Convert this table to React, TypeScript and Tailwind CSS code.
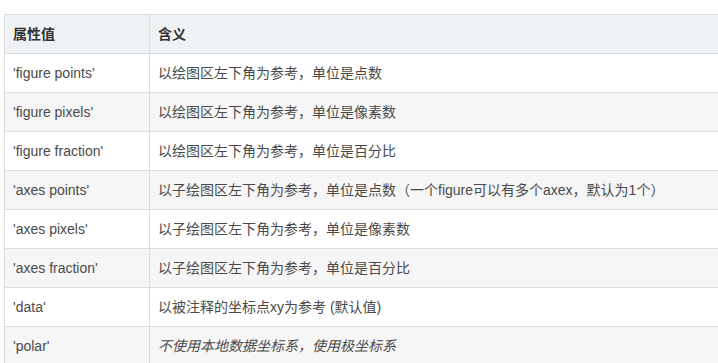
import React from 'react';

type Row = { key: string; desc: string; italic?: boolean };

const rows: Row[] = [
  { key: "'figure points'", desc: '以绘图区左下角为参考，单位是点数' },
  { key: "'figure pixels'", desc: '以绘图区左下角为参考，单位是像素数' },
  { key: "'figure fraction'", desc: '以绘图区左下角为参考，单位是百分比' },
  { key: "'axes points'", desc: '以子绘图区左下角为参考，单位是点数（一个figure可以有多个axex，默认为1个）' },
  { key: "'axes pixels'", desc: '以子绘图区左下角为参考，单位是像素数' },
  { key: "'axes fraction'", desc: '以子绘图区左下角为参考，单位是百分比' },
  { key: "'data'", desc: '以被注释的坐标点xy为参考 (默认值)' },
  { key: "'polar'", desc: '不使用本地数据坐标系，使用极坐标系', italic: true },
];

const App: React.FC = () => {
  return (
    <div
      className="w-[718px] h-[363px] overflow-hidden bg-white pt-[14px] pl-[4px] [text-spacing-trim:space-all]"
      style={{ fontFamily: '"Liberation Sans", Arial, "Noto Sans CJK SC", sans-serif' }}
    >
      <table className="w-[730px] border-collapse text-[14px] text-[#4a4a4a] leading-[20px]">
        <thead>
          <tr className="bg-[#eff2f5] h-[39px]">
            <th className="w-[145px] border border-[#dddddd] px-2 text-left font-bold text-[#333]">属性值</th>
            <th className="border border-[#dddddd] px-2 text-left font-bold text-[#333]">含义</th>
          </tr>
        </thead>
        <tbody>
          {rows.map((r, i) => (
            <tr key={r.key} className={`h-[39px] ${i % 2 === 1 ? 'bg-[#f6f6f6]' : 'bg-white'}`}>
              <td className="border border-[#dddddd] px-2">{r.key}</td>
              <td className={`border border-[#dddddd] px-2 ${r.italic ? 'italic' : ''}`}>{r.desc}</td>
            </tr>
          ))}
        </tbody>
      </table>
    </div>
  );
};

export default App;
